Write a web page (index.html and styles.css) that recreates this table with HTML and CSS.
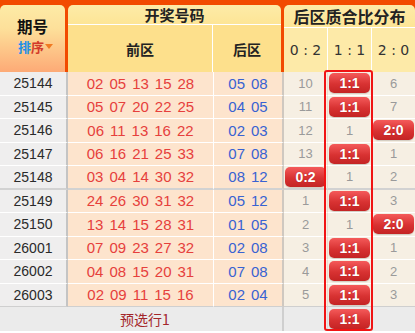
FILE: index.html
```html
<!DOCTYPE html>
<html lang="zh">
<head>
<meta charset="utf-8">
<title>开奖号码 后区质合比分布</title>
<link rel="stylesheet" href="styles.css">
</head>
<body>
<div class="board">
  <div class="head">
    <div class="hcell h-id">
      <div class="h-id-title">期号</div>
      <div class="sort"><span class="s-blue">排</span><span class="s-red">序</span><i class="tri"></i></div>
    </div>
    <div class="hcell h-draw">
      <div class="htitle">开奖号码</div>
      <div class="hsub"><div class="hs-front">前区</div><div class="hs-back">后区</div></div>
    </div>
    <div class="hcell h-dist">
      <div class="htitle dist-title">后区质合比分布</div>
      <div class="hsub dist-sub"><div>0 : 2</div><div>1 : 1</div><div>2 : 0</div></div>
    </div>
  </div>

  <div class="rows">
    <div class="row">
      <div class="c-id">25144</div>
      <div class="c-front"><span>02</span><span>05</span><span>13</span><span>15</span><span>28</span></div>
      <div class="c-back"><span>05</span><span>08</span></div>
      <div class="c-d">10</div><div class="c-d"><span class="badge">1:1</span></div><div class="c-d">6</div>
    </div>
    <div class="row">
      <div class="c-id">25145</div>
      <div class="c-front"><span>05</span><span>07</span><span>20</span><span>22</span><span>25</span></div>
      <div class="c-back"><span>04</span><span>05</span></div>
      <div class="c-d">11</div><div class="c-d"><span class="badge">1:1</span></div><div class="c-d">7</div>
    </div>
    <div class="row">
      <div class="c-id">25146</div>
      <div class="c-front"><span>06</span><span>11</span><span>13</span><span>16</span><span>22</span></div>
      <div class="c-back"><span>02</span><span>03</span></div>
      <div class="c-d">12</div><div class="c-d">1</div><div class="c-d"><span class="badge">2:0</span></div>
    </div>
    <div class="row">
      <div class="c-id">25147</div>
      <div class="c-front"><span>06</span><span>16</span><span>21</span><span>25</span><span>33</span></div>
      <div class="c-back"><span>07</span><span>08</span></div>
      <div class="c-d">13</div><div class="c-d"><span class="badge">1:1</span></div><div class="c-d">1</div>
    </div>
    <div class="row group-end">
      <div class="c-id">25148</div>
      <div class="c-front"><span>03</span><span>04</span><span>14</span><span>30</span><span>32</span></div>
      <div class="c-back"><span>08</span><span>12</span></div>
      <div class="c-d"><span class="badge">0:2</span></div><div class="c-d">1</div><div class="c-d">2</div>
    </div>
    <div class="row">
      <div class="c-id">25149</div>
      <div class="c-front"><span>24</span><span>26</span><span>30</span><span>31</span><span>32</span></div>
      <div class="c-back"><span>05</span><span>12</span></div>
      <div class="c-d">1</div><div class="c-d"><span class="badge">1:1</span></div><div class="c-d">3</div>
    </div>
    <div class="row">
      <div class="c-id">25150</div>
      <div class="c-front"><span>13</span><span>14</span><span>15</span><span>28</span><span>31</span></div>
      <div class="c-back"><span>01</span><span>05</span></div>
      <div class="c-d">2</div><div class="c-d">1</div><div class="c-d"><span class="badge">2:0</span></div>
    </div>
    <div class="row">
      <div class="c-id">26001</div>
      <div class="c-front"><span>07</span><span>09</span><span>23</span><span>27</span><span>32</span></div>
      <div class="c-back"><span>02</span><span>08</span></div>
      <div class="c-d">3</div><div class="c-d"><span class="badge">1:1</span></div><div class="c-d">1</div>
    </div>
    <div class="row">
      <div class="c-id">26002</div>
      <div class="c-front"><span>04</span><span>08</span><span>15</span><span>20</span><span>31</span></div>
      <div class="c-back"><span>07</span><span>08</span></div>
      <div class="c-d">4</div><div class="c-d"><span class="badge">1:1</span></div><div class="c-d">2</div>
    </div>
    <div class="row">
      <div class="c-id">26003</div>
      <div class="c-front"><span>02</span><span>09</span><span>11</span><span>15</span><span>16</span></div>
      <div class="c-back"><span>02</span><span>04</span></div>
      <div class="c-d">5</div><div class="c-d"><span class="badge">1:1</span></div><div class="c-d">3</div>
    </div>
    <div class="row pre">
      <div class="c-pre">预选行1</div>
      <div class="c-d"></div><div class="c-d"><span class="badge">1:1</span></div><div class="c-d"></div>
    </div>
  </div>
  <div class="frame"></div>
</div>
</body>
</html>
```

FILE: styles.css
```css
* { box-sizing: border-box; }
html, body { margin: 0; padding: 0; background: #fff; }
body {
  font-family: "Liberation Sans", Arial, "Noto Sans CJK SC", sans-serif;
  width: 415px;
  height: 333px;
  overflow: hidden;
}
.board { position: relative; width: 415px; }

/* header */
.head {
  display: grid;
  grid-template-columns: 65px 213px 131px;
  column-gap: 3px;
  background: #f24a00;
  padding-top: 5px;
  height: 72px;
}
.hcell {
  border-radius: 5px 5px 0 0;
  overflow: hidden;
  display: flex;
  flex-direction: column;
}
.h-id {
  background: linear-gradient(#fdeba6, #fde09a 35%, #fdaa76);
  align-items: center;
  justify-content: center;
  padding-bottom: 6px;
}
.h-id-title {
  font-family: "Noto Sans CJK SC", sans-serif;
  font-weight: 700;
  font-size: 15.5px;
  line-height: 22.5px;
  color: #111;
}
.sort {
  display: flex;
  align-items: center;
  font-family: "Noto Sans CJK SC", sans-serif;
  font-weight: 700;
  font-size: 13px;
  line-height: 19px;
  margin-left: 6px;
}
.s-blue { color: #1e8fe6; }
.s-red { color: #d23a2a; }
.tri {
  display: inline-block;
  width: 0; height: 0;
  border-left: 4px solid transparent;
  border-right: 4px solid transparent;
  border-top: 5px solid #f07a22;
  margin-left: 1px;
}
.htitle {
  height: 20px;
  background: linear-gradient(#fdeba8, #fde596);
  font-family: "Noto Sans CJK SC", sans-serif;
  font-weight: 700;
  font-size: 15px;
  line-height: 20px;
  text-align: center;
  color: #222;
  border-bottom: 1px solid #fff;
}
.dist-title { height: 23px; line-height: 22px; font-size: 16px; }
.hsub {
  flex: 1;
  display: grid;
  grid-template-columns: 145px 68px;
  background: #fde08c;
  font-family: "Noto Sans CJK SC", sans-serif;
  font-weight: 700;
  font-size: 14px;
  color: #222;
}
.hsub > div {
  display: flex;
  align-items: center;
  justify-content: center;
}
.hs-front { border-right: 1px solid #fff; }
.dist-sub {
  grid-template-columns: 43px 44px 44px;
  background: #fdeaa8;
  font-family: "DejaVu Sans", sans-serif;
  font-weight: 400;
  font-size: 14px;
  color: #333;
}
.dist-sub > div { border-left: 1px solid #fff; }
.dist-sub > div:first-child { border-left: 0; }

/* rows */
.row {
  display: grid;
  grid-template-columns: 68px 146px 70px 43px 44px 44px;
  height: 23.5px;
}
.row > div {
  display: flex;
  align-items: center;
  justify-content: center;
  border-bottom: 1px solid #fff;
}
.c-id {
  background: #efeeee;
  border-right: 2px solid #c4c4c4;
  font-size: 14px;
  color: #2a2a2a;
}
.c-front, .c-back {
  background: #fde4cd;
  font-size: 15px;
  gap: 6px;
}
.c-front { color: #e6403c; border-right: 1px solid #fff; }
.c-back { color: #3862d2; border-right: 2px solid #cfc8c0; }
.c-d {
  background: #f6efe3;
  font-size: 13px;
  color: #9a9a9a;
  border-left: 1px solid #e6ddd0;
}
.row > .c-d:nth-child(4) { border-left: 0; }
.group-end > div { border-bottom: 2px solid #d2d2d2; }
.row:nth-child(10) > div { border-bottom: 1px solid #cfcfcf; }

.badge {
  display: flex;
  align-items: center;
  justify-content: center;
  width: calc(100% - 2px);
  height: 20px;
  border-radius: 5px;
  background: linear-gradient(#f45a5a, #d83232 55%, #c42424);
  color: #fff;
  font-weight: 700;
  font-size: 14px;
  text-shadow: 0 0 1px rgba(120, 0, 0, 0.5);
  box-shadow: 0 1px 1px rgba(0, 0, 0, 0.15);
}

.pre { grid-template-columns: 284px 43px 44px 44px; height: 24px; }
.pre > div { background: #ebebeb; border-bottom: 0; }
.pre > .c-d { border-left: 1px solid #dadada; }
.pre > .c-d:nth-child(2) { border-left: 0; }
.c-pre {
  font-family: "Noto Sans CJK SC", sans-serif;
  font-size: 14px;
  color: #a3262a;
  padding-left: 8px;
  border-right: 2px solid #cfcfcf;
}

.frame {
  position: absolute;
  left: 324px;
  top: 70px;
  width: 49px;
  height: 261px;
  border: 2px solid #f01414;
  border-radius: 3px;
  pointer-events: none;
}
```
